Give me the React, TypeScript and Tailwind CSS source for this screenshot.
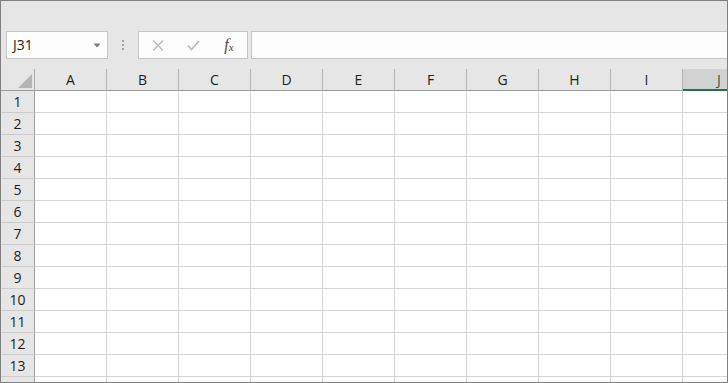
import { Fragment } from "react";

const columns = ["A", "B", "C", "D", "E", "F", "G", "H", "I", "J"];
const rows = Array.from({ length: 14 }, (_, i) => i + 1);

function CancelIcon() {
  return (
    <svg width="12" height="11" viewBox="0 0 12 11" fill="none">
      <path d="M1 0.5L11 10.5M11 0.5L1 10.5" stroke="#b9b9b9" strokeWidth="1.4" />
    </svg>
  );
}

function EnterIcon() {
  return (
    <svg width="13" height="11" viewBox="0 0 13 11" fill="none">
      <path d="M1 5.5L4.5 9.5L12 1" stroke="#b9b9b9" strokeWidth="1.8" />
    </svg>
  );
}

export default function App() {
  return (
    <div className="w-[728px] h-[383px] border border-[#808080] bg-[#e6e6e6] overflow-hidden flex flex-col font-['Open_Sans',sans-serif] text-[#1e1e1e]">
      {/* ribbon area (collapsed) */}
      <div className="h-[30px] shrink-0" />

      {/* name box + formula bar */}
      <div className="h-[28px] shrink-0 flex pl-[5px]">
        <div className="w-[102px] h-full border border-[#c6c6c6] bg-[#fdfdfd] flex items-center justify-between pl-[6px] pr-[6px]">
          <span className="text-[14px] leading-none">J31</span>
          <svg width="8" height="5" viewBox="0 0 8 5">
            <path d="M0.5 0.5H7.5L4 4.5Z" fill="#7a7a7a" />
          </svg>
        </div>

        <div className="w-[30px] flex flex-col items-center justify-center gap-[2px]">
          <span className="w-[2px] h-[2px] bg-[#a3a3a3]" />
          <span className="w-[2px] h-[2px] bg-[#a3a3a3]" />
          <span className="w-[2px] h-[2px] bg-[#a3a3a3]" />
        </div>

        <div className="w-[110px] h-full border border-[#c6c6c6] bg-[#fdfdfd] flex items-center">
          <div className="w-[36px] flex justify-center pl-[2px]">
            <CancelIcon />
          </div>
          <div className="w-[36px] flex justify-center pt-[1px]">
            <EnterIcon />
          </div>
          <div className="w-[36px] flex justify-center pb-[1px] text-[#4a4a4a] font-['Liberation_Serif',serif] italic leading-none">
            <span className="text-[16px]">f</span>
            <span className="text-[11px] mt-[5px]">x</span>
          </div>
        </div>

        <div className="ml-[3px] flex-1 h-full border border-r-0 border-[#c6c6c6] bg-[#fdfdfd]" />
      </div>

      <div className="h-[10px] shrink-0" />

      {/* sheet */}
      <div className="flex-1 flex flex-col overflow-hidden">
        <div className="h-[22px] shrink-0 flex">
          <div className="w-[34px] shrink-0 border-r border-b border-r-[#a8a8a8] border-b-[#9b9b9b] flex items-end justify-end pr-[2px] pb-[2px]">
            <svg width="14" height="14" viewBox="0 0 14 14">
              <path d="M14 0V14H0Z" fill="#b5b5b5" />
            </svg>
          </div>
          {columns.map((c) =>
            c === "J" ? (
              <div
                key={c}
                className="w-[72px] shrink-0 bg-[#d2d2d2] border-b-2 border-[#217346] flex items-center justify-center text-[14px] text-[#1c5c38]"
              >
                {c}
              </div>
            ) : (
              <div
                key={c}
                className="w-[72px] shrink-0 border-r border-b border-r-[#b4b4b4] border-b-[#9b9b9b] flex items-center justify-center text-[14px]"
              >
                {c}
              </div>
            )
          )}
        </div>

        {rows.map((r) => (
          <div key={r} className="h-[22px] shrink-0 flex">
            <div className="w-[34px] shrink-0 border-r border-b border-r-[#a0a0a0] border-b-[#cbcbcb] flex items-center justify-center text-[14px]">
              {/* last row is only a sliver, its label falls below the edge */}
              {r < 14 ? r : null}
            </div>
            {columns.map((c) => (
              <Fragment key={c}>
                <div className="w-[72px] shrink-0 bg-white border-r border-b border-[#d4d4d4]" />
              </Fragment>
            ))}
          </div>
        ))}
      </div>
    </div>
  );
}
